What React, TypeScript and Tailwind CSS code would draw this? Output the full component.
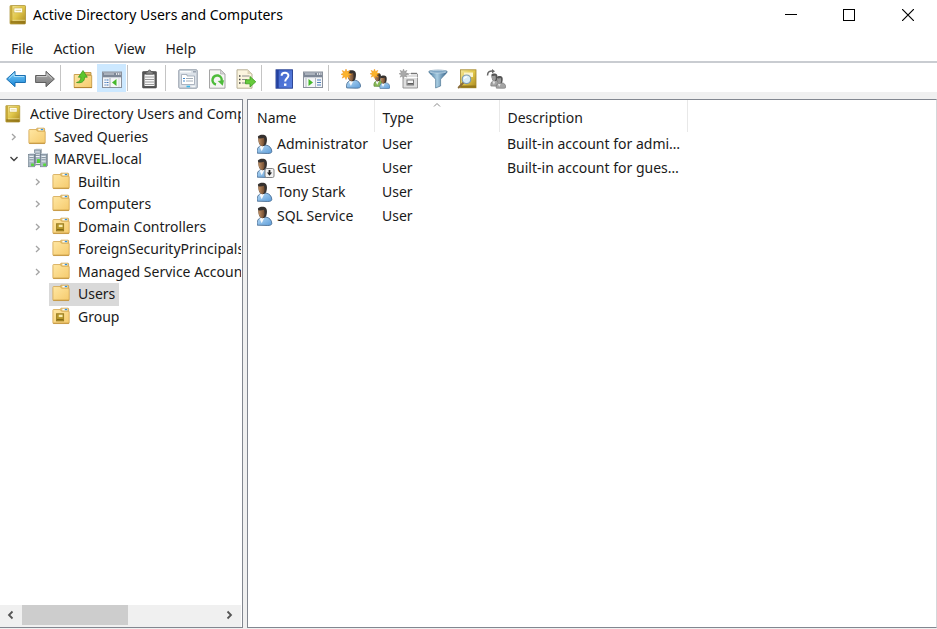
import type { ReactNode } from "react";

/* ---------- icons ---------- */

function Svg({ children, className = "h-5 w-5" }: { children: ReactNode; className?: string }) {
  return (
    <svg viewBox="0 0 20 20" className={"shrink-0 " + className} aria-hidden="true">
      {children}
    </svg>
  );
}

function Defs() {
  return (
    <svg className="h-0 w-0 shrink-0" aria-hidden="true">
      <defs>
        <linearGradient id="gold" x1="0" y1="0" x2="1" y2="1">
          <stop offset="0" stopColor="#f3e69a" />
          <stop offset="0.5" stopColor="#e0c64a" />
          <stop offset="1" stopColor="#a8861c" />
        </linearGradient>
        <linearGradient id="folder" x1="0" y1="0" x2="1" y2="1">
          <stop offset="0" stopColor="#ffe7a3" />
          <stop offset="1" stopColor="#f5ca6c" />
        </linearGradient>
        <linearGradient id="blue" x1="0" y1="0" x2="0" y2="1">
          <stop offset="0" stopColor="#7fd0fa" />
          <stop offset="1" stopColor="#1583d6" />
        </linearGradient>
        <linearGradient id="grey" x1="0" y1="0" x2="0" y2="1">
          <stop offset="0" stopColor="#b0b0b0" />
          <stop offset="1" stopColor="#777777" />
        </linearGradient>
        <linearGradient id="shirt" x1="0" y1="0" x2="1" y2="1">
          <stop offset="0" stopColor="#b9dcf6" />
          <stop offset="1" stopColor="#5b9bd8" />
        </linearGradient>
        <linearGradient id="skin" x1="0" y1="0" x2="1" y2="0">
          <stop offset="0" stopColor="#c59468" />
          <stop offset="1" stopColor="#6f4a2e" />
        </linearGradient>
        <linearGradient id="help" x1="0" y1="0" x2="1" y2="1">
          <stop offset="0" stopColor="#3f63c8" />
          <stop offset="1" stopColor="#5a80e0" />
        </linearGradient>
        <linearGradient id="funnel" x1="0" y1="0" x2="1" y2="0">
          <stop offset="0" stopColor="#3f7299" />
          <stop offset="0.45" stopColor="#a9cde2" />
          <stop offset="1" stopColor="#2f5f88" />
        </linearGradient>
      </defs>
    </svg>
  );
}

function BookIcon({ className }: { className?: string }) {
  return (
    <Svg className={className}>
      <rect x="2" y="0.5" width="15.5" height="18.5" rx="0.8" fill="url(#gold)" stroke="#a58a2a" strokeWidth="0.7" />
      <rect x="2.2" y="1" width="2.2" height="17.5" fill="#c6a93a" />
      <rect x="6" y="3" width="8.5" height="4.8" fill="#fffdf0" stroke="#c9ad3e" strokeWidth="0.6" />
      <path d="M7.5 5.4h5.5" stroke="#d9c778" strokeWidth="0.8" />
      <path d="M2.5 15.8h14.5v2.8H2.5z" fill="#8c6f14" opacity="0.75" />
      <path d="M4.5 15.3h12.7" stroke="#f6eaa5" strokeWidth="0.7" />
    </Svg>
  );
}

function FolderShape() {
  return (
    <>
      <path d="M9.5 5V2.2q0-.9.9-.9h7.2q.9 0 .9.9V6z" fill="#e9c46c" stroke="#c89b45" strokeWidth="0.8" />
      <path d="M1 3.6q0-.8.8-.8H9l1.6 1.8h7.700q.8 0 .8.8v12.2q0 .8-.8.8H1.8q-.8 0-.8-.8z" fill="url(#folder)" stroke="#d3a650" strokeWidth="0.9" />
      <path d="M11.500 2h5.600v1.800h-5.600z" fill="#fff" />
      <path d="M14.200 2.100h2.600v1.400h-2.600z" fill="#2f8fdc" />
      <path d="M1.3 18h17.6" stroke="#bd8e38" strokeWidth="1" />
    </>
  );
}

function FolderIcon() {
  return (
    <Svg className="h-[18px] w-[18px]">
      <FolderShape />
    </Svg>
  );
}

function UnitIcon() {
  return (
    <Svg className="h-[18px] w-[18px]">
      <FolderShape />
      <rect x="5" y="7.5" width="8" height="8" fill="#b5962a" stroke="#8d7118" strokeWidth="0.8" />
      <rect x="7.5" y="8.6" width="4.2" height="2.6" fill="#f9edb0" />
      <path d="M5.5 14h7" stroke="#77600f" />
    </Svg>
  );
}

function Tower({ x, y }: { x: number; y: number }) {
  return (
    <g transform={`translate(${x} ${y})`}>
      <path d="M0 1.4 1.4 0H7L6 1.4z" fill="#d9e2ea" />
      <rect x="0" y="1.4" width="6" height="12.4" fill="#a9b7c3" stroke="#6a7a88" strokeWidth="0.6" />
      <path d="M6.2 1.4 7 0v12.600l-.8 1.2z" fill="#5c6b78" />
      <path d="M1 3.6h4M1 5.8h4M1 8h4" stroke="#f4f8fb" strokeWidth="1" />
      <path d="M1 4.6h4M1 6.8h4" stroke="#71818f" strokeWidth="0.7" />
      <rect x="2.600" y="10.500" width="2.800" height="2.600" fill="#55d83a" />
    </g>
  );
}

function DomainIcon() {
  return (
    <Svg className="h-5 w-5">
      <Tower x={6.5} y={0.5} />
      <Tower x={0.5} y={5} />
      <Tower x={12.6} y={5} />
      <path d="M7.5 16.5h5" stroke="#7b8a96" strokeWidth="1.4" />
      <rect x="9" y="12.4" width="3" height="2.6" fill="#4fd135" />
    </Svg>
  );
}

function Person({ dx = 0, dy = 0, s = 1, mono = false, green = false }: { dx?: number; dy?: number; s?: number; mono?: boolean; green?: boolean }) {
  const shirt = mono ? "#a4a4a4" : green ? "#86b855" : "url(#shirt)";
  return (
    <g transform={`translate(${dx} ${dy}) scale(${s})`}>
      <path d="M2.8 19.200c-.8-3 .3-6.3 3-7.4l5.8-.7c3.200.5 5.700 3 5.700 6.400 0 1.400-1.800 2-4 2z" fill={shirt} stroke={mono ? "#666" : green ? "#4f7d2b" : "#42668c"} strokeWidth="0.8" />
      <path d="m5 12.500 2.200 4.700 2.900-6z" fill={mono ? "#e2e2e2" : "#f8fafc"} />
      <path d="M3.400 2.400C5 .4 9.800 0 11.600 2.200c1.300 1.500 1 5.200.2 7.600-.6 1.400-2 2.400-3.800 2.400-1.900 0-3.200-1.500-3.700-3.600z" fill={mono ? "#555" : "#35312f"} />
      <path d="M3.700 4.200c1.800.5 3.900.2 5.800-.5.5 2.600.9 4 .2 6-.7 1.800-1.600 2.700-2.500 2.400-1.800-.5-3.300-3.200-3.500-7.900z" fill={mono ? "#9b9b9b" : "url(#skin)"} />
    </g>
  );
}

function UserIcon({ disabled = false }: { disabled?: boolean }) {
  return (
    <Svg>
      <Person dx={-2.500} />
      {disabled && (
        <>
          <rect x="8" y="10.500" width="9" height="9" rx="1.500" fill="#f3f3f3" stroke="#777" strokeWidth="0.900" />
          <path d="M12.500 12v3.500" stroke="#222" strokeWidth="1.800" />
          <path d="M9.900 14.500h5.200l-2.600 3.200z" fill="#222" />
        </>
      )}
    </Svg>
  );
}

function Spark({ mono = false }: { mono?: boolean }) {
  return (
    <path
      d="M5 0l1.100 2.800L8.800 1.500 7.500 4.200l2.800 1.100-2.800 1.100 1.300 2.700-2.700-1.300L5 10.500 3.900 7.800 1.200 9.100l1.300-2.700L0 5.300l2.500-1.100L1.200 1.500l2.700 1.300z"
      fill={mono ? "#a9a9a9" : "#fbb32c"}
      stroke={mono ? "#8a8a8a" : "#f0951b"}
      strokeWidth="0.5"
    />
  );
}

const arrowPath = "M.6 10 9 2.300v4.200h10.400v7H9v4.200z";

const icons: Record<string, ReactNode> = {
  Back: (
    <Svg>
      <path d={arrowPath} fill="url(#blue)" stroke="#1b6fb0" strokeWidth="1" strokeLinejoin="round" />
      <path d="M3 9.500 8.100 4.700v2.800h10" fill="none" stroke="#b4e4fd" strokeWidth="0.9" />
    </Svg>
  ),
  Forward: (
    <Svg>
      <g transform="matrix(-1 0 0 1 20 0)">
        <path d={arrowPath} fill="url(#grey)" stroke="#5f5f5f" strokeWidth="1" strokeLinejoin="round" />
        <path d="M3 9.500 8.100 4.700v2.800h10" fill="none" stroke="#cfcfcf" strokeWidth="0.900" />
      </g>
    </Svg>
  ),
  "Up one level": (
    <Svg>
      <path d="M10 5V3.500h8V6z" fill="#e9c46c" stroke="#b58a38" strokeWidth="0.8" />
      <path d="M1.200 5.500h8l1.500 1h8v12H1.200z" fill="url(#folder)" stroke="#c49843" strokeWidth="0.900" />
      <path d="M1 18.600h18" stroke="#b38331" />
      <path d="M3.500 13.500c3-.6 4.300-2.300 4.400-5.300H5.400L10 1.500l4.300 6.700h-2.700c.1 4.200-2.900 6.300-8.100 5.300z" fill="#5cc62d" stroke="#35921a" strokeWidth="0.700" />
    </Svg>
  ),
  "Show or hide console tree": (
    <Svg>
      <rect x="0.500" y="3" width="19" height="15.500" fill="#f5f6f8" stroke="#8a919c" />
      <path d="M1 3.500h18V8H1z" fill="#7d8796" />
      <path d="M2 5h10" stroke="#e2e6eb" strokeWidth="0.900" />
      <path d="M14 5h1.200m.8 0h1.200m.6 0h.8" stroke="#fff" strokeWidth="1.300" />
      <path d="M1 8.600h18" stroke="#c9ced6" />
      <path d="M8 9v9" stroke="#a4abb5" />
      <path d="M2.500 11h4M2.500 13.500h4M2.500 16h4" stroke="#3e74b8" strokeWidth="1.200" strokeDasharray="1.200 .8 2" />
      <path d="M14.500 10v7L10 13.500z" fill="#45b82b" />
      <path d="M17 9v9" stroke="#d5d8dd" />
    </Svg>
  ),
  Paste: (
    <Svg>
      <rect x="2.500" y="2.500" width="14" height="16.500" rx="0.800" fill="#555" stroke="#444" strokeWidth="0.600" />
      <path d="M4.500 5.500h10v11.500h-10z" fill="#f7f7f7" />
      <path d="M5 8h9M5 10.500h9M5 13h9M5 15.500h9" stroke="#9b9b9b" />
      <path d="M6 5V2.800h2Q8.100 1 9.500 1t1.500 1.800h2V5z" fill="#8b8b8b" stroke="#4d4d4d" strokeWidth="0.700" />
    </Svg>
  ),
  Properties: (
    <Svg>
      <rect x="0.800" y="0.800" width="18.400" height="18.400" rx="0.800" fill="#dbe1e8" stroke="#8f99a6" />
      <path d="M2 2.800h11" stroke="#fff" strokeWidth="1.300" />
      <path d="M15 2.800h3" stroke="#909aa8" strokeWidth="1.300" />
      <path d="M3.500 7V5.500h5.500V7h7.500v8.500h-13z" fill="#fff" stroke="#9aa5b2" strokeWidth="0.800" />
      <path d="M5 9.500h2M5 12h2" stroke="#4089cf" strokeWidth="1.200" />
      <path d="M8 9.500h7M8 12h7" stroke="#a3adb8" />
      <path d="M8.500 17.500h3.500" stroke="#36b4e8" strokeWidth="1.600" />
      <path d="M13.500 17.500H17" stroke="#f4f6f8" strokeWidth="1.400" />
    </Svg>
  ),
  Refresh: (
    <Svg>
      <path d="M2.500.8h11L18 5v14.200H2.500z" fill="#f5f5f3" stroke="#9b9b9b" strokeWidth="0.900" />
      <path d="M13.500.8V5H18z" fill="#d7d7d7" stroke="#a6a6a6" strokeWidth="0.600" />
      <path d="M9 15.500A4.600 4.600 0 1 1 14.600 12" fill="none" stroke="#4dbb3a" strokeWidth="2.500" />
      <path d="m10.700 12 6.400-.8-1.400 5.500z" fill="#4dbb3a" />
    </Svg>
  ),
  "Export list": (
    <Svg>
      <path d="M1 .8h10.500L16 5v14.200H1z" fill="#fbf5df" stroke="#b0a88d" strokeWidth="0.900" />
      <path d="M11.500.8V5H16z" fill="#ddd4b8" />
      <path d="M3 7h1.500M3 10.500h1.500M3 14h1.500" stroke="#444" strokeWidth="1.300" />
      <path d="M6 7h7.500M6 10.500h5M6 14h5" stroke="#8d8d8d" />
      <path d="M9.500 10.800H14V7.500l5.800 5.300L14 18v-3.200H9.500z" fill="#67cb3c" stroke="#3b9c20" strokeWidth="0.800" />
    </Svg>
  ),
  Help: (
    <Svg>
      <rect x="2" y="0.800" width="16.500" height="18.400" fill="url(#help)" stroke="#223c8f" strokeWidth="0.900" />
      <path d="M2.500 1h2.200v18H2.500z" fill="#24419d" />
      <path d="M7.600 6.800c0-4 6.800-4 6.800-.2 0 2.800-3.200 2.700-3.200 6" fill="none" stroke="#fff" strokeWidth="2" />
      <rect x="10" y="14.500" width="2.400" height="2.400" fill="#fff" />
    </Svg>
  ),
  "Show or hide action pane": (
    <Svg>
      <rect x="0.500" y="3" width="19" height="15.500" fill="#f5f6f8" stroke="#8a919c" />
      <path d="M1 3.500h18V8H1z" fill="#7d8796" />
      <path d="M2 5h10" stroke="#e2e6eb" strokeWidth="0.900" />
      <path d="M14 5h1.200m.8 0h1.200m.6 0h.8" stroke="#fff" strokeWidth="1.300" />
      <path d="M1 8.600h18" stroke="#c9ced6" />
      <path d="M12.500 9v9M3 9v9" stroke="#b4bac3" />
      <path d="M14 11h4M14 13.500h4M14 16h4" stroke="#4b7db9" strokeWidth="1.100" />
      <path d="M5.500 10v7l4.500-3.500z" fill="#45b82b" />
    </Svg>
  ),
  "New user": (
    <Svg>
      <Person dx={3} dy={0.500} s={0.96} />
      <Spark />
    </Svg>
  ),
  "New group": (
    <Svg>
      <Person dx={2} dy={3.500} s={0.72} green />
      <Person dx={8} dy={6} s={0.700} />
      <g transform="scale(.9)">
        <Spark />
      </g>
    </Svg>
  ),
  "New organizational unit": (
    <Svg>
      <path d="M4 5h14.500v14H4z" fill="#dedede" stroke="#8d8d8d" strokeWidth="0.900" />
      <path d="M10 5.500h8M4.500 8.500h14" stroke="#fff" strokeWidth="1.200" />
      <path d="M12 4.500h6" stroke="#777" strokeWidth="1.400" />
      <rect x="8" y="11" width="6.500" height="5" fill="#f6f6f6" stroke="#7a7a7a" />
      <path d="M8.500 14.800h5.500" stroke="#555" strokeWidth="1.500" />
      <g transform="scale(.9)">
        <Spark mono />
      </g>
    </Svg>
  ),
  Filter: (
    <Svg>
      <path d="M.8 2.500c0-1.800 18.400-1.800 18.400 0 0 1.500-4.500 5-6.600 8V17l-5 2v-8.500C5.500 7.500.8 4 .8 2.500z" fill="url(#funnel)" stroke="#426b8b" strokeWidth="0.600" />
      <ellipse cx="10" cy="2.700" rx="8.300" ry="1.400" fill="#7fa6c4" stroke="#c9dde9" strokeWidth="0.700" />
    </Svg>
  ),
  Find: (
    <Svg>
      <rect x="3.500" y="0.800" width="15.500" height="18" fill="url(#gold)" stroke="#a2872c" strokeWidth="0.800" />
      <path d="M7 3.500h9V8H7z" fill="#fbf4cd" />
      <path d="M4 16.500h15v2.300H4z" fill="#94771a" />
      <path d="m6.500 13.500-4.800 5" stroke="#8a6d3a" strokeWidth="2" strokeLinecap="round" />
      <circle cx="9.500" cy="10.300" r="4.300" fill="#d8edf8" stroke="#7f9bae" strokeWidth="1.200" />
      <path d="M7.200 9.700c.5-1.300 1.500-2 3-1.900" fill="none" stroke="#fff" strokeWidth="1.200" />
    </Svg>
  ),
  "Add to group": (
    <Svg>
      <Person dx={3} dy={4} s={0.680} mono />
      <Person dx={8.500} dy={6.500} s={0.660} mono />
      <path d="M1.500 6.500C1.500 2.500 4 1.800 7 2" fill="none" stroke="#686868" strokeWidth="1.500" />
      <path d="M6 0v4.600L9 2.300z" fill="#686868" />
    </Svg>
  ),
};

/* ---------- data ---------- */

const toolbarGroups: string[][] = [
  ["Back", "Forward"],
  ["Up one level", "Show or hide console tree"],
  ["Paste"],
  ["Properties", "Refresh", "Export list"],
  ["Help", "Show or hide action pane"],
  ["New user", "New group", "New organizational unit", "Filter", "Find", "Add to group"],
];

type Node = { label: string; kind: "folder" | "unit" | "domain"; level: 1 | 2; state: "open" | "closed" | "leaf"; selected?: boolean };

const nodes: Node[] = [
  { label: "Saved Queries", kind: "folder", level: 1, state: "closed" },
  { label: "MARVEL.local", kind: "domain", level: 1, state: "open" },
  { label: "Builtin", kind: "folder", level: 2, state: "closed" },
  { label: "Computers", kind: "folder", level: 2, state: "closed" },
  { label: "Domain Controllers", kind: "unit", level: 2, state: "closed" },
  { label: "ForeignSecurityPrincipals", kind: "folder", level: 2, state: "closed" },
  { label: "Managed Service Accounts", kind: "folder", level: 2, state: "closed" },
  { label: "Users", kind: "folder", level: 2, state: "leaf", selected: true },
  { label: "Group", kind: "unit", level: 2, state: "leaf" },
];

const users = [
  { name: "Administrator", type: "User", description: "Built-in account for administering the computer/domain" },
  { name: "Guest", type: "User", description: "Built-in account for guest access to the computer/domain", disabled: true },
  { name: "Tony Stark", type: "User", description: "" },
  { name: "SQL Service", type: "User", description: "" },
];

/* ---------- parts ---------- */

function TitleBar() {
  return (
    <header className="flex h-[30px] shrink-0 items-center pl-2">
      <BookIcon className="h-5 w-5" />
      <h1 className="ml-[5px] flex-1 text-sm text-black">Active Directory Users and Computers</h1>
      <div className="flex h-full">
        <button aria-label="Minimize" className="grid w-[59px] place-items-center">
          <svg viewBox="0 0 12 12" className="h-3 w-3" aria-hidden="true">
            <path d="M0 5.500h12" stroke="#000" />
          </svg>
        </button>
        <button aria-label="Maximize" className="grid w-[58px] place-items-center">
          <svg viewBox="0 0 12 12" className="h-3 w-3" aria-hidden="true">
            <rect x="0.500" y="0.500" width="11" height="11" fill="none" stroke="#000" />
          </svg>
        </button>
        <button aria-label="Close" className="grid w-[59px] place-items-center">
          <svg viewBox="0 0 12 12" className="h-3 w-3" aria-hidden="true">
            <path d="m0 0 12 12M12 0 0 12" stroke="#000" strokeWidth="1.200" />
          </svg>
        </button>
      </div>
    </header>
  );
}

function MenuBar() {
  return (
    <nav className="flex h-[33px] shrink-0 items-end border-b-2 border-[#c9ccd1] pl-px">
      {["File", "Action", "View", "Help"].map((m) => (
        <button key={m} className="px-2.5 leading-6">
          {m}
        </button>
      ))}
    </nav>
  );
}

function Toolbar() {
  return (
    <div role="toolbar" aria-label="Standard" className="flex h-[29px] shrink-0 items-center pt-px pl-px">
      {toolbarGroups.map((group, i) => (
        <div key={i} className="flex items-center">
          {i > 0 && <div className="mr-[7px] ml-px h-[26px] w-px bg-[#c4c4c4]" />}
          {group.map((name) => (
            <button
              key={name}
              aria-label={name}
              aria-pressed={name === "Show or hide console tree"}
              className="flex h-7 w-[29px] items-center justify-center pt-px aria-pressed:bg-[#cce8ff]"
            >
              {icons[name]}
            </button>
          ))}
        </div>
      ))}
    </div>
  );
}

function Chevron({ open }: { open: boolean }) {
  return (
    <svg viewBox="0 0 10 10" className="h-2.5 w-2.5" fill="none" aria-hidden="true">
      {open ? <path d="m1.500 3 3.500 3.500L8.500 3" stroke="#404040" strokeWidth="1.400" /> : <path d="M3 2 6.200 5 3 8" stroke="#a3a3a3" strokeWidth="1.300" />}
    </svg>
  );
}

function TreePane() {
  return (
    <aside className="flex w-[243px] shrink-0 flex-col overflow-hidden border-y border-r border-[#828790] bg-white pr-px">
      <ul role="tree" aria-label="Console tree" className="grid h-[228px] shrink-0 auto-rows-fr overflow-hidden pt-[3px] whitespace-nowrap">
        <li role="treeitem" className="flex min-w-0 items-center gap-2 overflow-hidden pl-1">
          <BookIcon className="h-[18px] w-[18px]" />
          <span className="min-w-0 overflow-hidden">Active Directory Users and Computers</span>
        </li>
        {nodes.map((n) => (
          <li key={n.label} role="treeitem" aria-selected={!!n.selected} className={n.level === 1 ? "flex min-w-0 pl-1" : "flex min-w-0 pl-7"}>
            <div className="grid w-[21px] shrink-0 place-items-center pr-px">
              {n.state !== "leaf" && (
                <button aria-label={"Toggle " + n.label}>
                  <Chevron open={n.state === "open"} />
                </button>
              )}
            </div>
            <div className={"flex min-w-0 items-center gap-2 pl-[3px] " + (n.selected ? "bg-[#d9d9d9] pr-1" : "")}>
              <span className="grid w-[18px] shrink-0 place-items-center pb-0.5">
                {n.kind === "folder" ? <FolderIcon /> : n.kind === "unit" ? <UnitIcon /> : <DomainIcon />}
              </span>
              <span className="min-w-0 overflow-hidden leading-5">{n.label}</span>
            </div>
          </li>
        ))}
      </ul>
      <div className="mt-auto flex h-[22px] shrink-0 items-stretch bg-[#f0f0f0] pb-0.5">
        <button aria-label="Scroll left" className="grid w-[22px] place-items-center">
          <svg viewBox="0 0 10 10" className="h-2.5 w-2.5" aria-hidden="true">
            <path d="M6.500 1.500 3 5l3.500 3.500" fill="none" stroke="#555" strokeWidth="1.800" />
          </svg>
        </button>
        <div className="flex-1">
          <div className="h-full w-[106px] bg-[#cdcdcd]" />
        </div>
        <button aria-label="Scroll right" className="grid w-6 place-items-center">
          <svg viewBox="0 0 10 10" className="h-2.5 w-2.5" aria-hidden="true">
            <path d="M3.500 1.500 7 5 3.500 8.500" fill="none" stroke="#555" strokeWidth="1.800" />
          </svg>
        </button>
      </div>
    </aside>
  );
}

function ListPane() {
  return (
    <main className="min-w-0 flex-1 overflow-hidden border border-[#828790] border-r-[#d5d7da] bg-white">
      <table className="w-[439px] table-fixed border-collapse text-left">
        <colgroup>
          <col className="w-[126px]" />
          <col className="w-[125px]" />
          <col className="w-[188px]" />
        </colgroup>
        <thead>
          <tr className="h-8">
            <th className="border-r border-[#e8e8e8] pt-1 pl-[9px] font-normal">Name</th>
            <th aria-sort="ascending" className="relative border-r border-[#e8e8e8] pt-1 pl-2 font-normal">
              Type
              <svg viewBox="0 0 8 6" className="absolute top-0.5 left-1/2 h-1.5 w-2 -translate-x-1/2" aria-hidden="true">
                <path d="M1 4.500 4 1.500l3 3" fill="none" stroke="#8a8a8a" />
              </svg>
            </th>
            <th className="border-r border-[#e8e8e8] pt-1 pl-2 font-normal">Description</th>
          </tr>
        </thead>
        <tbody>
          {users.map((u) => (
            <tr key={u.name} className="h-6">
              <td className="pl-[9px]">
                <div className="flex items-center whitespace-nowrap">
                  <UserIcon disabled={u.disabled} />
                  <span>{u.name}</span>
                </div>
              </td>
              <td className="pl-2">{u.type}</td>
              <td className="truncate pr-1 pl-2">{u.description}</td>
            </tr>
          ))}
        </tbody>
      </table>
    </main>
  );
}

export default function App() {
  return (
    <div className="flex h-screen flex-col overflow-hidden bg-white font-['Noto_Sans','Open_Sans',sans-serif] text-sm text-[#1a1a1a]">
      <Defs />
      <TitleBar />
      <MenuBar />
      <Toolbar />
      <div className="flex min-h-0 flex-1 gap-1 bg-[#f0f0f0] pt-[7px] pb-px">
        <TreePane />
        <ListPane />
      </div>
    </div>
  );
}
